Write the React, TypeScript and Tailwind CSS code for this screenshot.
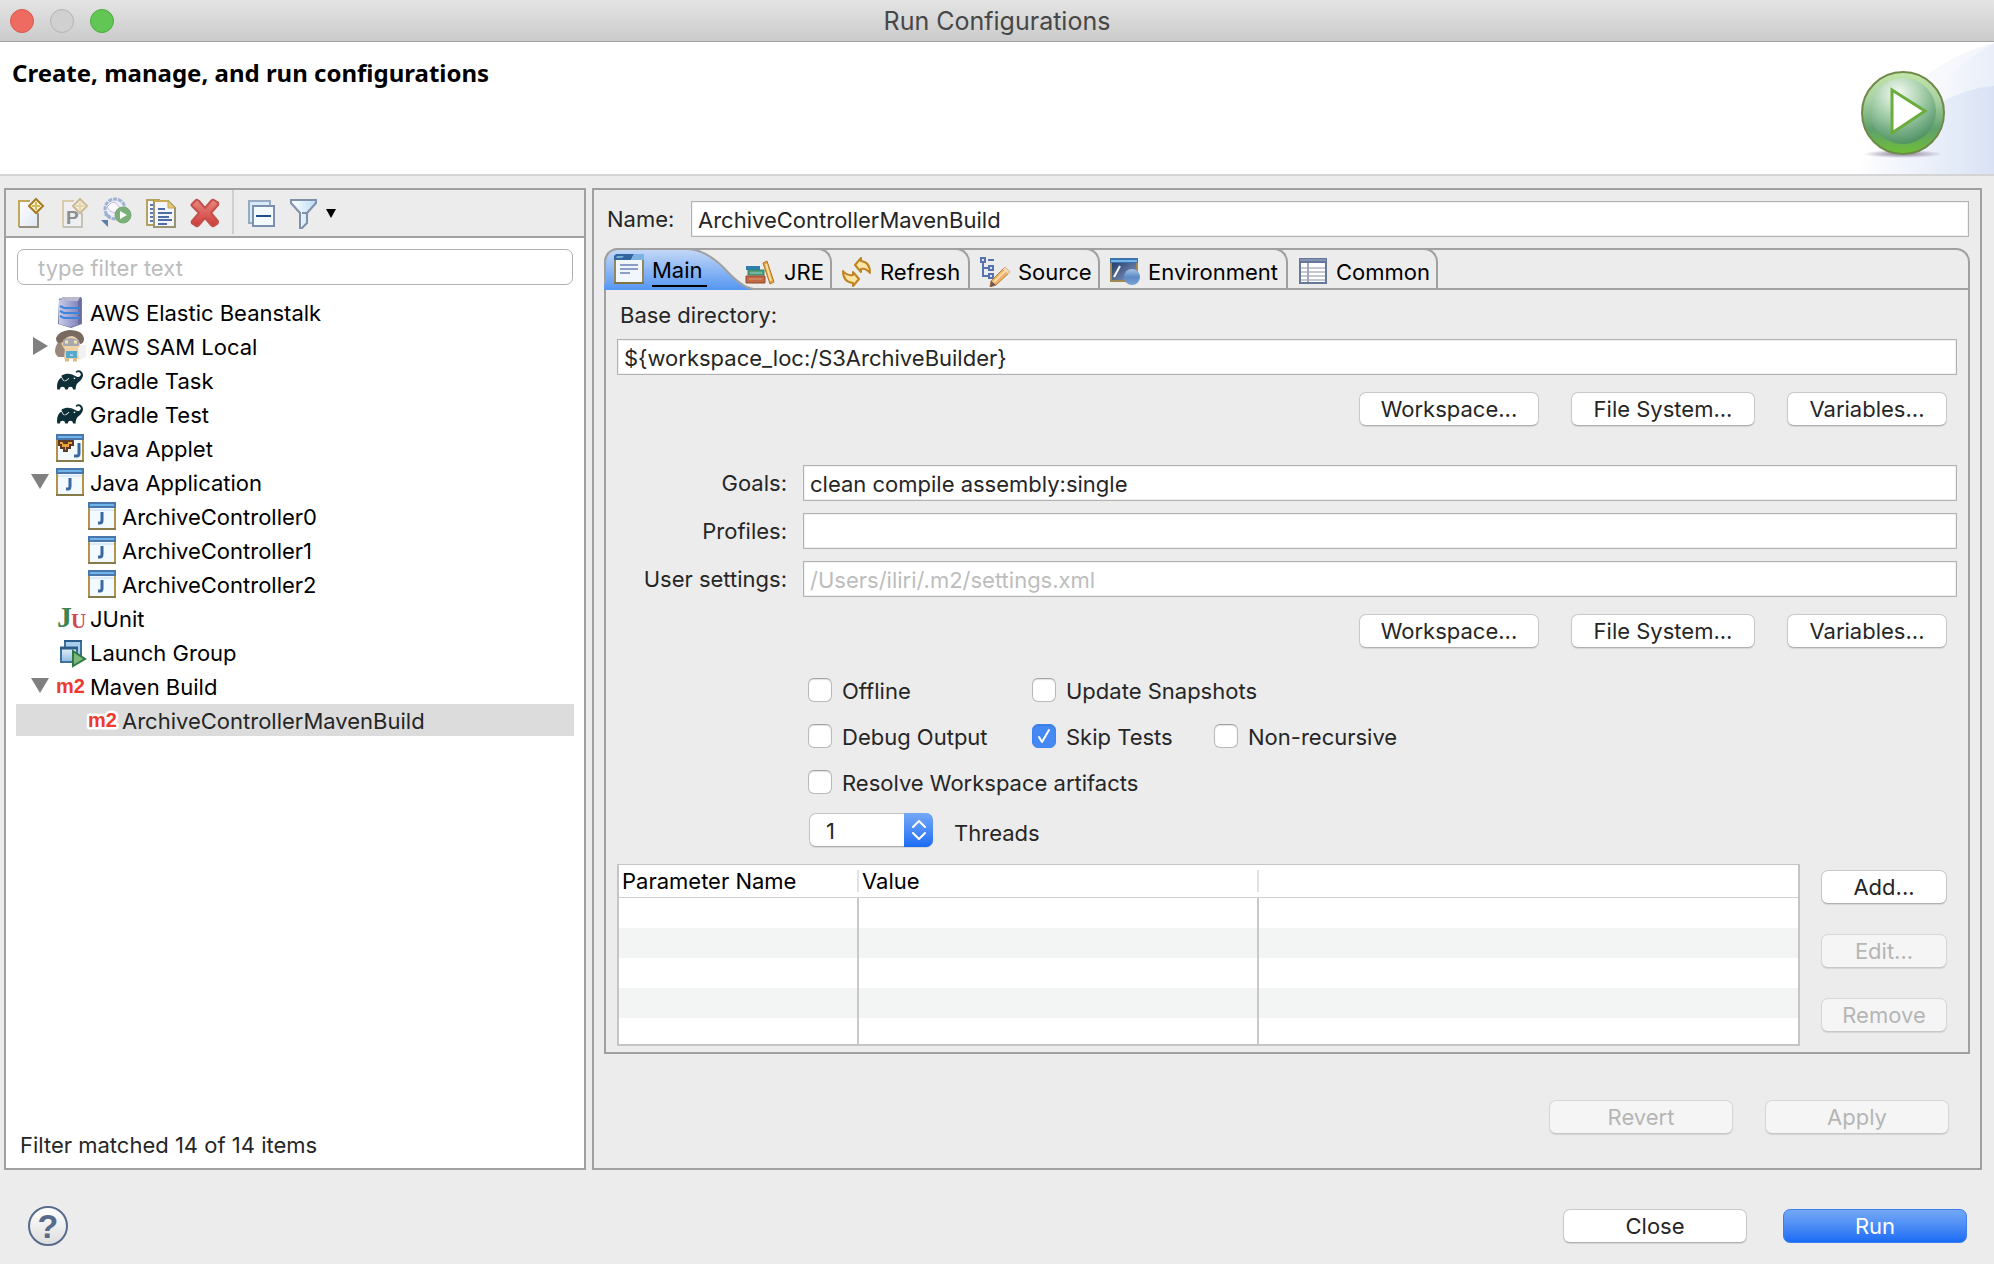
import { useState, type ReactNode } from "react";
import { SiGradle } from "react-icons/si";

/* ---------- Toolbar icons ---------- */

const toolIcon = "block h-8 w-8 shrink-0";

function Sparkle({ x, y }: { x: number; y: number }) {
  return (
    <g transform={`translate(${x} ${y})`}>
      <path d="M0-7 7 0 0 7-7 0Z" fill="#fdf6d8" stroke="#a67c1c" strokeWidth="2" />
      <path d="M0-4V4M-4 0H4" stroke="#d9b95c" strokeWidth="2" />
    </g>
  );
}

function NewIcon() {
  return (
    <svg viewBox="0 0 32 32" className={toolIcon}>
      <defs>
        <linearGradient id="page" x1="0" y1="0" x2="1" y2="1">
          <stop offset="0" stopColor="#fff" />
          <stop offset="1" stopColor="#dfe7f6" />
        </linearGradient>
      </defs>
      <path d="M3 4H22V30H3Z" fill="url(#page)" />
      <path d="M14 4H3V30" fill="none" stroke="#c4a85a" strokeWidth="2" />
      <path d="M3 30H22V16" fill="none" stroke="#94927c" strokeWidth="2" />
      <Sparkle x={20} y={9} />
    </svg>
  );
}

function NewPrototypeIcon() {
  return (
    <svg viewBox="0 0 32 32" className={toolIcon}>
      <g opacity="0.45">
        <path d="M3 4H22V30H3Z" fill="#f3f4f8" />
        <path d="M14 4H3V30" fill="none" stroke="#c4a85a" strokeWidth="2" />
        <path d="M3 30H22V16" fill="none" stroke="#94927c" strokeWidth="2" />
        <Sparkle x={20} y={9} />
      </g>
      <text x="6" y="27" fontSize="19" fontWeight="700" fontFamily="Liberation Sans, sans-serif" fill="#8e8e8e">
        P
      </text>
    </svg>
  );
}

function RerunIcon() {
  return (
    <svg viewBox="0 0 32 32" className={toolIcon}>
      <circle cx="14" cy="12" r="10" fill="#e3eaf5" stroke="#9fb2d3" strokeWidth="3" strokeDasharray="4 1" />
      <circle cx="14" cy="12" r="8" fill="#f1eef8" />
      <path d="M10 6 14 5 20 12 16 17 9 14 6 10Z" fill="#faf8fd" stroke="#c3bbe0" strokeWidth="1" />
      <path d="M4 17 9 20" stroke="#9cb0d2" strokeWidth="3" />
      <path d="M0 23H7V30Z" fill="#5b7cae" />
      <circle cx="22" cy="18" r="8" fill="#7bb07a" stroke="#72ab72" />
      <path d="M19 14 26 18 19 22Z" fill="#fff" />
    </svg>
  );
}

function DuplicateIcon() {
  return (
    <svg viewBox="0 0 32 32" className={toolIcon}>
      <path d="M2 3H14V28H2Z" fill="#f6f8fd" stroke="#b5a15f" strokeWidth="2" />
      <path d="M5 8H8M5 12H8M5 16H8M5 20H8M5 24H8" stroke="#5c78ad" strokeWidth="2" />
      <path d="M9 4H23L30 11V30H9Z" fill="#f2f5fc" stroke="#9a9374" strokeWidth="2" />
      <path d="M9 4H23" stroke="#c9a850" strokeWidth="2" />
      <path d="M23 4V11H30Z" fill="#e7c878" stroke="#c9a850" />
      <path d="M13 12H20M13 16H27M13 20H24M13 23H27M13 27H22" stroke="#4d6ba5" strokeWidth="2" />
    </svg>
  );
}

function DeleteIcon() {
  return (
    <svg viewBox="0 0 32 32" className={toolIcon}>
      <defs>
        <linearGradient id="cross" x1="0" y1="0" x2="0" y2="1">
          <stop offset="0" stopColor="#e8877c" />
          <stop offset="1" stopColor="#cf3a3c" />
        </linearGradient>
      </defs>
      <path
        d="M7 3 3 7Q2 8 3 9L10 16 3 24Q2 26 4 27L7 29Q8 30 10 28L16 21 22 28Q24 30 25 29L28 27Q30 25 28 23L22 16 29 8Q30 6 28 5L25 3Q24 2 22 4L16 11 10 4Q8 2 7 3Z"
        fill="url(#cross)"
        stroke="#c4504b"
        strokeWidth="2"
        strokeLinejoin="round"
      />
    </svg>
  );
}

function CollapseIcon() {
  return (
    <svg viewBox="0 0 32 32" className={toolIcon}>
      <path d="M4 4H25V26H4Z" fill="#d7eafa" stroke="#9aa9c2" strokeWidth="2" />
      <path d="M8 9H29V29H8Z" fill="#f3fafe" stroke="#7d8faf" strokeWidth="2" />
      <path d="M11 19H26" stroke="#1c4d86" strokeWidth="2" />
    </svg>
  );
}

function FilterIcon() {
  return (
    <svg viewBox="0 0 32 32" className={toolIcon}>
      <defs>
        <linearGradient id="funnel" x1="0" y1="0" x2="1" y2="0">
          <stop offset="0" stopColor="#ffffff" />
          <stop offset="1" stopColor="#b9def7" />
        </linearGradient>
      </defs>
      <path d="M4 3H29V6L20 16V26L15 31H13V16L4 6Z" fill="url(#funnel)" stroke="#8090ab" strokeWidth="2" />
      <path d="M15 16H20" stroke="#8090ab" strokeWidth="2" />
    </svg>
  );
}

/* ---------- Tree icons ---------- */

const treeIcon = "block h-7 w-7 shrink-0";

function ServerIcon() {
  return (
    <svg viewBox="0 0 28 32" className="block h-8 w-7 shrink-0">
      <defs>
        <linearGradient id="server" x1="0" y1="0" x2="1" y2="0">
          <stop offset="0" stopColor="#c9cbe8" />
          <stop offset="1" stopColor="#8386bd" />
        </linearGradient>
      </defs>
      <path d="M3 3 8 1H25L26 3V28L15 32 2 28Z" fill="#75779f" />
      <path d="M3 4 22 4 22 29 14 31 3 28Z" fill="url(#server)" />
      <path d="M3 3 9 1H24L22 5H9Z" fill="#b9bad2" />
      <path d="M22 5 25 3V27L22 29Z" fill="#6b6da0" />
      <path d="M4 10 8 12H24M4 15 8 17H24M4 20 8 22H24" fill="none" stroke="#3d84dd" strokeWidth="2" />
    </svg>
  );
}

function SquirrelIcon() {
  return (
    <svg viewBox="0 0 28 32" className="block h-8 w-7 shrink-0 overflow-visible">
      <path d="M2 12Q-4 22 2 27L10 27V13Z" fill="#99877b" />
      <path d="M22 15H30V27L22 31Z" fill="#f2f2f2" />
      <path d="M5 11Q6 5 14 6 23 6 25 11 24 21 15 21 6 21 5 11Z" fill="#f0d3ab" />
      <path d="M0 8Q3 1 13 0 28 0 28 10 27 14 24 14 22 7 16 6 10 6 7 12 0 15 0 8Z" fill="#796a60" />
      <path d="M7 10Q14 6 23 10V16H7Z" fill="#a9a9ac" />
      <path d="M9 12H12M18 12H21" stroke="#f5e3b5" strokeWidth="3" />
      <path d="M9 18H22L23 29H8Z" fill="#eed2a4" />
      <path d="M10 21H21V28H10Z" fill="#58aacd" />
      <path d="M14 24H17V26H14Z" fill="#9bd2ea" />
      <path d="M9 30H13M17 30H21" stroke="#d9b789" strokeWidth="3" />
    </svg>
  );
}

function GradleIcon() {
  return <SiGradle className="mx-px h-[26px] w-[26px] shrink-0 text-[#0f2f38]" />;
}

function WindowFrame({ children }: { children: ReactNode }) {
  return (
    <svg viewBox="0 0 28 28" className={treeIcon}>
      <path d="M1 3H27V27H1Z" fill="#f3faff" />
      <path d="M1 4V27M27 4V27" stroke="#b3924a" strokeWidth="2" />
      <path d="M0 27H28" stroke="#857a48" strokeWidth="2" />
      <path d="M0 0H28V6H0Z" fill="#4a77ab" />
      <path d="M2 3H26" stroke="#6fb5ea" strokeWidth="2" />
      {children}
    </svg>
  );
}

function JavaAppIcon() {
  return (
    <WindowFrame>
      <path d="M2 7H26V9H2Z" fill="#d9eafa" />
      <path d="M14 10V18Q14 21 12 21H10" fill="none" stroke="#3a68a0" strokeWidth="3" />
    </WindowFrame>
  );
}

function AppletIcon() {
  return (
    <WindowFrame>
      <path d="M3 7H17V11H14V14H11V17H8V14H5V11H3Z" fill="#e8a33a" stroke="#5c3a26" strokeWidth="2" />
      <path d="M7 7H12V10H7Z" fill="#5c3a26" />
      <path d="M23 9V19Q23 22 21 22H18" fill="none" stroke="#3a68a0" strokeWidth="3" />
    </WindowFrame>
  );
}

function JUnitIcon() {
  return (
    <svg viewBox="0 0 28 28" className="block h-7 w-7 shrink-0 overflow-visible">
      <g fontFamily="Liberation Serif, serif" fontWeight="700">
        <text x="1" y="23" fontSize="30" fill="#3c8450">
          J
        </text>
        <text x="15" y="24" fontSize="21" fill="#cf4a52">
          U
        </text>
      </g>
    </svg>
  );
}

function LaunchGroupIcon() {
  return (
    <svg viewBox="0 0 28 28" className="block h-7 w-7 shrink-0 overflow-visible">
      <defs>
        <linearGradient id="launch" x1="0" y1="0" x2="0" y2="1">
          <stop offset="0" stopColor="#e6f2fb" />
          <stop offset="1" stopColor="#8fbbe0" />
        </linearGradient>
      </defs>
      <path d="M9 3H25V19H9Z" fill="#a9cdea" stroke="#3f719d" strokeWidth="2" />
      <path d="M8 3H26" stroke="#2c5c8c" strokeWidth="2" />
      <path d="M5 10H21V24H5Z" fill="url(#launch)" stroke="#3f719d" strokeWidth="2" />
      <path d="M4 10H22" stroke="#2c5c8c" strokeWidth="3" />
      <path d="M17 13 29 21 17 28Z" fill="#7db97c" stroke="#2f7a44" strokeWidth="2" />
    </svg>
  );
}

function MavenIcon() {
  return (
    <svg viewBox="0 0 28 28" className="block h-7 w-7 shrink-0 overflow-visible">
      <g fontFamily="Liberation Sans, sans-serif" fontWeight="700" fontSize="20" strokeLinejoin="round">
        <text
          x="0"
          y="21"
          fill="#ee3a2f"
          stroke="#fff"
          strokeWidth="5"
          paintOrder="stroke"
        >
          m2
        </text>
      </g>
    </svg>
  );
}

/* ---------- Tab icons ---------- */

const tabIcon = "relative block h-[30px] w-[30px] shrink-0";

function MainTabIcon() {
  return (
    <svg viewBox="0 0 30 30" className={tabIcon}>
      <path d="M1 2H29V29H1Z" fill="#f0f6fb" />
      <path d="M1 4V29M29 4V29" stroke="#93875c" strokeWidth="2" />
      <path d="M0 29H30" stroke="#7d7444" strokeWidth="2" />
      <path d="M2 0H20L17 6H0V2Z" fill="#33659f" />
      <path d="M20 0H30V6H17Z" fill="#7db3e2" />
      <path d="M3 2H10L8 4H2Z" fill="#77add9" />
      <path d="M6 11H24M6 15H24M6 19H16" stroke="#8b9ec8" strokeWidth="2" />
    </svg>
  );
}

function BooksIcon() {
  return (
    <svg viewBox="0 0 30 30" className={tabIcon}>
      <path d="M1 9H15V13H1Z" fill="#2e7fb0" />
      <path d="M3 13H19V18H3Z" fill="#4fa183" stroke="#35805f" />
      <path d="M1 19H20V26H1Z" fill="#bf6a45" stroke="#93492e" />
      <path d="M5 16H17" stroke="#9ccdb6" strokeWidth="1" />
      <path d="M4 22H17" stroke="#dc9a78" strokeWidth="1" />
      <path d="M18 6 22 4 29 25 25 27Z" fill="#e8a33c" stroke="#b4752a" />
      <path d="M21 7 26 24" stroke="#fae0a2" strokeWidth="2" />
    </svg>
  );
}

function RefreshTabIcon() {
  return (
    <svg viewBox="0 0 30 30" className={tabIcon}>
      <g fill="#fbe4a4" stroke="#bf8420" strokeWidth="2" strokeLinejoin="round">
        <path d="M13 8 19 1V4Q28 5 28 16 24 11 19 12V15Z" />
        <path d="M17 22 11 29V26Q1 25 1 14 5 19 11 18V15Z" />
      </g>
    </svg>
  );
}

function SourceTabIcon() {
  return (
    <svg viewBox="0 0 30 30" className={tabIcon}>
      <g fill="#dce5f4" stroke="#5673ab" strokeWidth="2">
        <path d="M3 5V19H9M3 11H9" fill="none" />
        <path d="M1 1H5V5H1ZM9 9H13V13H9ZM9 17H13V21H9ZM8 3H14" />
      </g>
      <path d="M11 24 25 10 30 15 16 28 10 30Z" fill="#efb069" stroke="#b97e44" />
      <path d="M25 10 30 15 28 17 23 12Z" fill="#f5d8b8" />
      <path d="M10 30 11 24 16 28Z" fill="#6e5b53" />
      <path d="M14 25 26 13" stroke="#fbdcaa" strokeWidth="2" />
    </svg>
  );
}

function EnvironmentTabIcon() {
  return (
    <svg viewBox="0 0 30 30" className={tabIcon}>
      <defs>
        <linearGradient id="env" x1="0" y1="0" x2="1" y2="1">
          <stop offset="0" stopColor="#1d3767" />
          <stop offset="1" stopColor="#8ea1c6" />
        </linearGradient>
        <linearGradient id="globe" x1="0" y1="0" x2="0" y2="1">
          <stop offset="0" stopColor="#a6c4e6" />
          <stop offset="0.5" stopColor="#5c8ac4" />
          <stop offset="1" stopColor="#79a3d4" />
        </linearGradient>
      </defs>
      <path d="M1 4H27V24H1Z" fill="url(#env)" stroke="#a08a53" strokeWidth="2" />
      <path d="M0 1H28V6H0Z" fill="#3c72ae" />
      <path d="M1 4H27" stroke="#77b5e6" strokeWidth="2" />
      <path d="M4 20 10 9" stroke="#fff" strokeWidth="2" />
      <circle cx="22" cy="20" r="8" fill="url(#globe)" />
    </svg>
  );
}

function CommonTabIcon() {
  return (
    <svg viewBox="0 0 30 30" className={tabIcon}>
      <path d="M2 2H28V26H2Z" fill="#fff" stroke="#66779c" strokeWidth="2" />
      <path d="M1 1H29V6H1Z" fill="#66779c" />
      <path d="M2 3H28" stroke="#a8b1c6" strokeWidth="1" />
      <path d="M3 11H27M3 15H27M3 19H27M3 23H27" stroke="#c3c8d3" strokeWidth="2" />
      <path d="M10 6V25" stroke="#a0a9bd" strokeWidth="2" />
    </svg>
  );
}

/* ---------- Banner ---------- */

function BannerArt() {
  return (
    <svg viewBox="0 0 140 132" className="h-[132px] w-[140px] shrink-0">
      <defs>
        <linearGradient id="sky" x1="0" y1="0" x2="1" y2="0">
          <stop offset="0" stopColor="#fff" />
          <stop offset="1" stopColor="#e9eef9" />
        </linearGradient>
        <linearGradient id="skyDeep" x1="0" y1="0" x2="1" y2="0">
          <stop offset="0" stopColor="#fff" />
          <stop offset="1" stopColor="#d9e2f5" />
        </linearGradient>
        <linearGradient id="ball" x1="0" y1="0" x2="0" y2="1">
          <stop offset="0" stopColor="#c4e5a8" />
          <stop offset="0.35" stopColor="#a8d0a2" />
          <stop offset="0.7" stopColor="#5fa06c" />
          <stop offset="1" stopColor="#6fbf35" />
        </linearGradient>
        <radialGradient id="inner" cx="0.42" cy="0.25" r="0.75">
          <stop offset="0" stopColor="#fff" />
          <stop offset="0.5" stopColor="#a5cfac" />
          <stop offset="1" stopColor="#4f9065" />
        </radialGradient>
        <radialGradient id="shade">
          <stop offset="0.3" stopColor="#a9a0b5" />
          <stop offset="1" stopColor="#a9a0b5" stopOpacity="0" />
        </radialGradient>
      </defs>
      <path d="M0 132Q30 70 73 33 104 10 140 1V132Z" fill="url(#sky)" opacity="0.6" />
      <path d="M50 132Q75 60 91 43 110 15 140 2V132Z" fill="url(#sky)" />
      <path d="M0 132Q50 82 86 61 112 46 140 44V132Z" fill="url(#skyDeep)" />
      <ellipse cx="49" cy="112" rx="40" ry="4" fill="url(#shade)" />
      <circle cx="49" cy="71" r="41" fill="url(#ball)" stroke="#6f8a48" strokeWidth="2" />
      <circle cx="49" cy="69" r="33" fill="url(#inner)" opacity="0.9" />
      <path d="M38 48V91L71 69Z" fill="#fff" stroke="#6aad3c" strokeWidth="3" />
    </svg>
  );
}

/* ---------- Controls ---------- */

function PushButton({
  children,
  className = "",
  disabled = false,
}: {
  children: ReactNode;
  className?: string;
  disabled?: boolean;
}) {
  return (
    <button
      type="button"
      disabled={disabled}
      className={`h-[34px] shrink-0 rounded-[7px] border border-[#c9c9c9] border-b-[#b0b0b0] bg-white pt-px text-center leading-[31px] text-[#262626] shadow-[0_1px_1px_rgba(0,0,0,0.1)] disabled:border-[#d6d6d6] disabled:border-b-[#c8c8c8] disabled:bg-[#f5f5f5] disabled:text-[#b5b5b5] ${className}`}
    >
      {children}
    </button>
  );
}

function LocationButtons() {
  return (
    <div className="mt-[17px] flex justify-end gap-8 pr-[10px]">
      <PushButton className="w-[180px]">Workspace...</PushButton>
      <PushButton className="w-[184px]">File System...</PushButton>
      <PushButton className="w-40">Variables...</PushButton>
    </div>
  );
}

const field =
  "h-9 w-full min-w-0 border border-[#b2b2b2] bg-white px-[6px] pt-[2px] text-[#262626] shadow-[inset_0_0_0_1px_#f1f1f1] outline-none placeholder:text-[#bdbdbd]";

function Check({ label, on = false, className = "" }: { label: string; on?: boolean; className?: string }) {
  return (
    <label className={`flex h-6 items-center gap-[10px] whitespace-nowrap ${className}`}>
      <span className="grid h-6 w-6 shrink-0">
        <input
          type="checkbox"
          defaultChecked={on}
          className="peer col-start-1 row-start-1 h-6 w-6 appearance-none rounded-[6px] border border-[#b9b9b9] border-t-[#a2a2a2] bg-white shadow-[inset_0_1px_1px_rgba(0,0,0,0.12)] checked:border-[#3f83f2] checked:bg-[#4589f5]"
        />
        <svg
          viewBox="0 0 24 24"
          className="pointer-events-none invisible col-start-1 row-start-1 h-6 w-6 peer-checked:visible"
        >
          <path d="M7 13 10 18 17 6" fill="none" stroke="#fff" strokeWidth="2" strokeLinecap="round" strokeLinejoin="round" />
        </svg>
      </span>
      <span className="pt-[2px]">{label}</span>
    </label>
  );
}

/* ---------- Launch configuration tree ---------- */

type Item = { label: string; icon: ReactNode; state?: "open" | "closed"; nested?: boolean; selected?: boolean };

const items: Item[] = [
  { label: "AWS Elastic Beanstalk", icon: <ServerIcon /> },
  { label: "AWS SAM Local", icon: <SquirrelIcon />, state: "closed" },
  { label: "Gradle Task", icon: <GradleIcon /> },
  { label: "Gradle Test", icon: <GradleIcon /> },
  { label: "Java Applet", icon: <AppletIcon /> },
  { label: "Java Application", icon: <JavaAppIcon />, state: "open" },
  { label: "ArchiveController0", icon: <JavaAppIcon />, nested: true },
  { label: "ArchiveController1", icon: <JavaAppIcon />, nested: true },
  { label: "ArchiveController2", icon: <JavaAppIcon />, nested: true },
  { label: "JUnit", icon: <JUnitIcon /> },
  { label: "Launch Group", icon: <LaunchGroupIcon /> },
  { label: "Maven Build", icon: <MavenIcon />, state: "open" },
  { label: "ArchiveControllerMavenBuild", icon: <MavenIcon />, nested: true, selected: true },
];

function Disclosure({ state }: { state?: "open" | "closed" }) {
  return (
    <svg viewBox="0 0 18 18" className="mr-[7px] block h-[18px] w-[18px] shrink-0">
      {state === "open" && <path d="M0 1H18L9 16Z" fill="#808080" />}
      {state === "closed" && <path d="M2 0 17 9 2 18Z" fill="#808080" />}
    </svg>
  );
}

function Sidebar() {
  return (
    <aside className="flex w-[582px] shrink-0 flex-col border-2 border-[#a0a0a0] bg-white">
      <div className="flex h-12 items-center border-b-2 border-[#a0a0a0] bg-[#ececec] pl-[10px]">
        <button type="button" aria-label="New launch configuration">
          <NewIcon />
        </button>
        <button type="button" aria-label="New prototype" className="ml-3">
          <NewPrototypeIcon />
        </button>
        <button type="button" aria-label="Export" className="ml-[9px]">
          <RerunIcon />
        </button>
        <button type="button" aria-label="Duplicate" className="ml-3">
          <DuplicateIcon />
        </button>
        <button type="button" aria-label="Delete" className="ml-3">
          <DeleteIcon />
        </button>
        <span className="ml-[11px] h-11 w-[2px] self-start bg-[#d0d0d0]" />
        <button type="button" aria-label="Collapse all" className="ml-[11px]">
          <CollapseIcon />
        </button>
        <button type="button" aria-label="Filter" className="ml-[10px] flex items-center">
          <FilterIcon />
          <svg viewBox="0 0 10 10" className="ml-[7px] h-[10px] w-[10px]">
            <path d="M0 1H10L5 10Z" fill="#000" />
          </svg>
        </button>
      </div>

      <div className="px-[11px] pt-[11px]">
        <input
          type="text"
          aria-label="Filter"
          placeholder="type filter text"
          className="block h-9 w-full rounded-[7px] border border-[#b0b0b0] bg-white px-5 pt-[2px] outline-none placeholder:text-[#bcbcbc]"
        />
      </div>

      <ul className="mt-[11px] flex flex-1 flex-col gap-[2px] px-[10px] text-black">
        {items.map((item) => (
          <li
            key={item.label}
            className={`flex h-8 items-center ${item.nested ? "pl-[47px]" : "pl-[15px]"} ${
              item.selected ? "bg-[#dcdcdc] text-[#262626]" : ""
            }`}
          >
            <Disclosure state={item.state} />
            {item.icon}
            <span className="ml-[6px] pt-[2px] whitespace-nowrap">{item.label}</span>
          </li>
        ))}
      </ul>

      <p className="px-[14px] pb-[11px] leading-6">Filter matched 14 of 14 items</p>
    </aside>
  );
}

/* ---------- Tabs ---------- */

const tabs = [
  { label: "JRE", icon: <BooksIcon />, size: "w-[87px] gap-[9px]" },
  { label: "Refresh", icon: <RefreshTabIcon />, size: "w-[138px] gap-2 pl-[10px]" },
  { label: "Source", icon: <SourceTabIcon />, size: "w-[130px] gap-2 pl-[10px]" },
  { label: "Environment", icon: <EnvironmentTabIcon />, size: "w-[188px] gap-2 pl-[10px]" },
  { label: "Common", icon: <CommonTabIcon />, size: "w-[150px] gap-2 pl-[10px]" },
];

function TabBar() {
  return (
    <div role="tablist" className="flex h-[42px] rounded-t-[14px] border-2 border-[#a0a0a0] text-black">
      <button
        type="button"
        role="tab"
        aria-selected="true"
        className="relative -mt-[2px] -mb-[2px] -ml-[2px] flex w-[141px] shrink-0 items-center gap-2 pl-[10px]"
      >
        <svg viewBox="0 0 150 42" className="absolute top-0 left-0 h-[42px] w-[150px]">
          <defs>
            <linearGradient id="active" x1="0" y1="0" x2="0" y2="1">
              <stop offset="0" stopColor="#c5d9f7" />
              <stop offset="1" stopColor="#5596f2" />
            </linearGradient>
          </defs>
          <path d="M0 42V14Q2 2 14 1H84Q102 2 120 20 138 40 150 42Z" fill="url(#active)" />
          <path d="M1 36V14Q2 2 14 1H84Q102 2 120 20 138 40 150 41" fill="none" stroke="#a0a0a0" strokeWidth="2" />
        </svg>
        <MainTabIcon />
        <span className="relative mt-1 h-8 w-[55px] border-b-2 border-black text-left leading-[30px]">Main</span>
      </button>
      {tabs.map((tab) => (
        <button
          key={tab.label}
          type="button"
          role="tab"
          aria-selected="false"
          className={`-mt-[2px] flex shrink-0 items-center rounded-tr-[14px] border-t-2 border-r-2 border-[#a0a0a0] pt-[5px] ${tab.size}`}
        >
          {tab.icon}
          <span className="whitespace-nowrap">{tab.label}</span>
        </button>
      ))}
    </div>
  );
}

function ParameterTable() {
  return (
    <div className="min-w-0 flex-1 border-2 border-t border-[#c5c5c5] bg-white">
      <table className="w-full table-fixed border-separate border-spacing-0 text-left text-black">
        <colgroup>
          <col className="w-60" />
          <col className="w-[400px]" />
          <col />
        </colgroup>
        <thead>
          <tr className="h-[33px]">
            <th className="border-b border-[#d2d2d2] p-0 font-normal">
              <span className="block h-[22px] border-r-2 border-[#e2e2e2] pl-[3px] leading-[22px]">
                Parameter Name
              </span>
            </th>
            <th className="border-b border-[#d2d2d2] p-0 font-normal">
              <span className="block h-[22px] border-r-2 border-[#e2e2e2] pl-[3px] leading-[22px]">Value</span>
            </th>
            <th className="border-b border-[#d2d2d2] p-0" />
          </tr>
        </thead>
        <tbody>
          {["h-[30px]", "h-[30px]", "h-[30px]", "h-[30px]", "h-[26px]"].map((height, row) => (
            <tr key={row} className={`${height} even:bg-[#f3f5f5]`}>
              <td className="border-r-2 border-[#c9c9c9] p-0" />
              <td className="border-r-2 border-[#c9c9c9] p-0" />
              <td className="p-0" />
            </tr>
          ))}
        </tbody>
      </table>
    </div>
  );
}

function MainTab() {
  const [threads, setThreads] = useState("1");
  return (
    <div className="border-2 border-t-0 border-[#a0a0a0] px-[11px] pt-[13px] pb-[6px]">
      <label htmlFor="base" className="block pl-[3px] leading-6">
        Base directory:
      </label>
      <input id="base" type="text" defaultValue="${workspace_loc:/S3ArchiveBuilder}" className={`mt-3 block ${field}`} />
      <LocationButtons />

      <div className="mt-[39px] grid grid-cols-[170px_1fr] items-center gap-x-4 gap-y-3 [&>label]:text-right">
        <label htmlFor="goals">Goals:</label>
        <input id="goals" type="text" defaultValue="clean compile assembly:single" className={field} />
        <label htmlFor="profiles">Profiles:</label>
        <input id="profiles" type="text" className={field} />
        <label htmlFor="settings">User settings:</label>
        <input id="settings" type="text" placeholder="/Users/iliri/.m2/settings.xml" className={field} />
      </div>
      <LocationButtons />

      <div className="mt-[30px] ml-[191px] grid grid-cols-[224px_182px_1fr] gap-y-[22px]">
        <Check label="Offline" />
        <Check label="Update Snapshots" className="col-span-2" />
        <Check label="Debug Output" />
        <Check label="Skip Tests" on />
        <Check label="Non-recursive" />
        <Check label="Resolve Workspace artifacts" className="col-span-3" />
      </div>

      <div className="mt-[19px] ml-[192px] flex items-center gap-[21px]">
        <div className="grid h-[34px] w-[124px] shrink-0">
          <select
            id="threads"
            value={threads}
            onChange={(event) => setThreads(event.target.value)}
            className="col-start-1 row-start-1 appearance-none rounded-[7px] border border-[#c4c4c4] border-b-[#b0b0b0] bg-white pt-px pl-4 text-[#262626] shadow-[0_1px_1px_rgba(0,0,0,0.1)] outline-none"
          >
            <option>1</option>
            <option>2</option>
            <option>3</option>
            <option>4</option>
          </select>
          <span className="pointer-events-none col-start-1 row-start-1 flex w-[29px] items-center justify-center justify-self-end rounded-r-[7px] bg-linear-to-b from-[#74a8f6] to-[#1a6cf5]">
            <svg viewBox="0 0 14 22" className="h-[22px] w-[14px]">
              <path
                d="M1 8 7 2 13 8M1 14 7 20 13 14"
                fill="none"
                stroke="#fff"
                strokeWidth="2"
                strokeLinecap="round"
                strokeLinejoin="round"
              />
            </svg>
          </span>
        </div>
        <label htmlFor="threads" className="pt-[5px]">
          Threads
        </label>
      </div>

      <div className="mt-[17px] flex items-start pr-[10px]">
        <ParameterTable />
        <div className="mt-[6px] ml-[21px] flex shrink-0 flex-col gap-[30px]">
          <PushButton className="w-[126px]">Add...</PushButton>
          <PushButton className="w-[126px]" disabled>
            Edit...
          </PushButton>
          <PushButton className="w-[126px]" disabled>
            Remove
          </PushButton>
        </div>
      </div>
    </div>
  );
}

export default function App() {
  return (
    <div className="flex min-h-screen flex-col bg-[#ececec] font-['Inter','Liberation_Sans',sans-serif] text-[22px] leading-6 text-[#262626]">
      <header className="grid h-[42px] shrink-0 grid-cols-[1fr_auto_1fr] items-center border-b border-[#a5a5a5] bg-linear-to-b from-[#e4e4e4] to-[#cbcbcb] px-[10px]">
        <div className="flex gap-4">
          <button
            type="button"
            aria-label="Close window"
            className="h-6 w-6 rounded-full border border-[#dd564c] bg-[#ed6b60]"
          />
          <button
            type="button"
            aria-label="Minimize window"
            className="h-6 w-6 rounded-full border border-[#b4b4b4] bg-[#d0d0d0]"
          />
          <button
            type="button"
            aria-label="Zoom window"
            className="h-6 w-6 rounded-full border border-[#4bab3b] bg-[#61c654]"
          />
        </div>
        <h1 className="text-[25px] text-[#474747]">Run Configurations</h1>
      </header>

      <section className="flex shrink-0 justify-between border-b-2 border-[#d4d4d4] bg-white pl-3">
        <h2 className="pt-[15px] font-['Noto_Sans','Open_Sans',sans-serif] text-[24px] leading-8 font-bold text-black">
          Create, manage, and run configurations
        </h2>
        <BannerArt />
      </section>

      <main className="flex flex-1 gap-[6px] pt-3 pr-3 pl-1">
        <Sidebar />
        <section className="min-w-0 flex-1 border-2 border-[#a0a0a0] px-[10px] pt-[11px]">
          <div className="flex items-center pr-px pl-[3px]">
            <label htmlFor="name" className="w-[84px] shrink-0">
              Name:
            </label>
            <input id="name" type="text" defaultValue="ArchiveControllerMavenBuild" className={field} />
          </div>
          <div className="mt-[11px]">
            <TabBar />
            <MainTab />
          </div>
          <div className="mt-[46px] flex justify-end gap-8 pr-[21px]">
            <PushButton className="w-[184px]" disabled>
              Revert
            </PushButton>
            <PushButton className="w-[184px]" disabled>
              Apply
            </PushButton>
          </div>
        </section>
      </main>

      <footer className="flex shrink-0 items-center gap-9 pt-9 pr-[27px] pb-[18px] pl-7">
        <button
          type="button"
          aria-label="Help"
          className="mr-auto h-10 w-10 rounded-full border-2 border-[#576b8c] bg-linear-to-b from-white to-[#dedede] text-center font-['Liberation_Sans',sans-serif] text-[34px] leading-9 font-bold text-[#576b8c]"
        >
          ?
        </button>
        <PushButton className="w-[184px]">Close</PushButton>
        <button
          type="button"
          className="h-[34px] w-[184px] rounded-[7px] border border-[#3d7fee] bg-linear-to-b from-[#74a8f6] to-[#1a6cf5] pt-px leading-[31px] text-white"
        >
          Run
        </button>
      </footer>
    </div>
  );
}
